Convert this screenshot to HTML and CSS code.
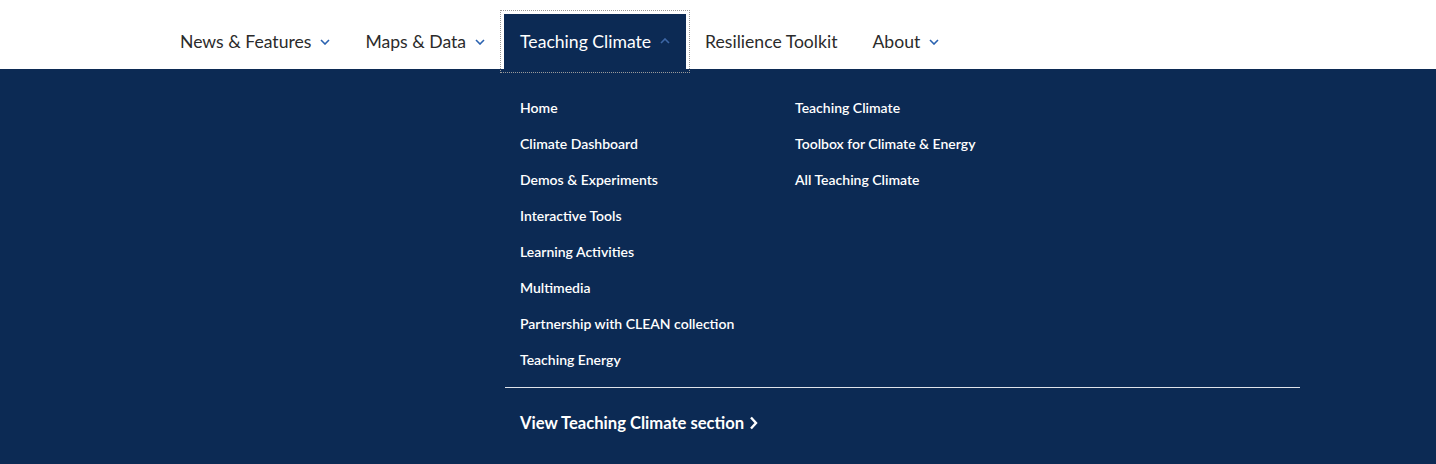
FILE: index.html
```html
<!DOCTYPE html>
<html lang="en">
<head>
<meta charset="utf-8">
<title>Teaching Climate menu</title>
<link rel="stylesheet" href="styles.css">
</head>
<body>
<header class="site-header">
  <nav class="primary-nav">
    <ul class="nav-list">
      <li class="nav-item"><a class="nav-link" href="#">News &amp; Features<svg class="chev" viewBox="0 0 10 6" aria-hidden="true"><path d="M1 1l4 4 4-4"/></svg></a></li>
      <li class="nav-item"><a class="nav-link" href="#">Maps &amp; Data<svg class="chev" viewBox="0 0 10 6" aria-hidden="true"><path d="M1 1l4 4 4-4"/></svg></a></li>
      <li class="nav-item is-open"><a class="nav-link" href="#">Teaching Climate<svg class="chev" viewBox="0 0 10 6" aria-hidden="true"><path d="M1 5l4-4 4 4"/></svg></a></li>
      <li class="nav-item"><a class="nav-link" href="#">Resilience Toolkit</a></li>
      <li class="nav-item"><a class="nav-link" href="#">About<svg class="chev" viewBox="0 0 10 6" aria-hidden="true"><path d="M1 1l4 4 4-4"/></svg></a></li>
    </ul>
  </nav>
</header>
<section class="megamenu">
  <div class="megamenu-inner">
    <div class="menu-cols">
      <ul class="menu-col">
        <li><a href="#">Home</a></li>
        <li><a href="#">Climate Dashboard</a></li>
        <li><a href="#">Demos &amp; Experiments</a></li>
        <li><a href="#">Interactive Tools</a></li>
        <li><a href="#">Learning Activities</a></li>
        <li><a href="#">Multimedia</a></li>
        <li><a href="#">Partnership with CLEAN collection</a></li>
        <li><a href="#">Teaching Energy</a></li>
      </ul>
      <ul class="menu-col">
        <li><a href="#">Teaching Climate</a></li>
        <li><a href="#">Toolbox for Climate &amp; Energy</a></li>
        <li><a href="#">All Teaching Climate</a></li>
      </ul>
    </div>
    <div class="menu-footer">
      <a class="section-link" href="#">View Teaching Climate section<svg class="chev-right" viewBox="0 0 9 14" aria-hidden="true"><path d="M2 1.5l5 5.5-5 5.5"/></svg></a>
    </div>
  </div>
</section>
</body>
</html>
```
FILE: styles.css
```css
* { box-sizing: border-box; }
html, body { margin: 0; padding: 0; }
body {
  font-family: Lato, "Open Sans", "Liberation Sans", sans-serif;
  background: #0c2a54;
  height: 464px;
  overflow: hidden;
}
a { text-decoration: none; color: inherit; }
ul { list-style: none; margin: 0; padding: 0; }

.site-header { background: #fff; height: 69px; }
.primary-nav { height: 69px; }
.nav-list {
  display: flex;
  align-items: flex-end;
  gap: 3px;
  height: 69px;
  padding-left: 164px;
}
.nav-item { height: 55px; }
.nav-link {
  display: flex;
  align-items: center;
  gap: 9px;
  height: 55px;
  padding: 0 16px 1px 16px;
  font-size: 17.6px;
  color: #2b2b2b;
}
.chev {
  width: 10px;
  height: 6px;
  fill: none;
  stroke: #2a62b0;
  stroke-width: 1.6;
  margin-top: 2px;
}
.is-open { outline: 1px dotted #9a9a9a; outline-offset: 3px; }
.is-open .nav-link { background: #0c2a54; color: #fff; }
.is-open .chev { stroke: #3d67a6; margin-top: 0; }

.megamenu { background: #0c2a54; height: 395px; }
.megamenu-inner {
  margin-left: 505px;
  width: 795px;
  padding-top: 21px;
}
.menu-cols {
  display: grid;
  grid-template-columns: 275px 275px;
  padding-left: 15px;
  padding-bottom: 9px;
  border-bottom: 1px solid #dfe3ea;
}
.menu-col li a {
  display: block;
  height: 36px;
  line-height: 36px;
  font-size: 14px;
  font-weight: 600;
  color: #fff;
}
.menu-footer { padding: 23px 0 0 15px; }
.section-link {
  display: inline-flex;
  align-items: center;
  gap: 5px;
  font-size: 16.6px;
  font-weight: 700;
  color: #fff;
  line-height: 24px;
}
.chev-right {
  width: 9px;
  height: 14px;
  fill: none;
  stroke: #fff;
  stroke-width: 2.4;
}
```
